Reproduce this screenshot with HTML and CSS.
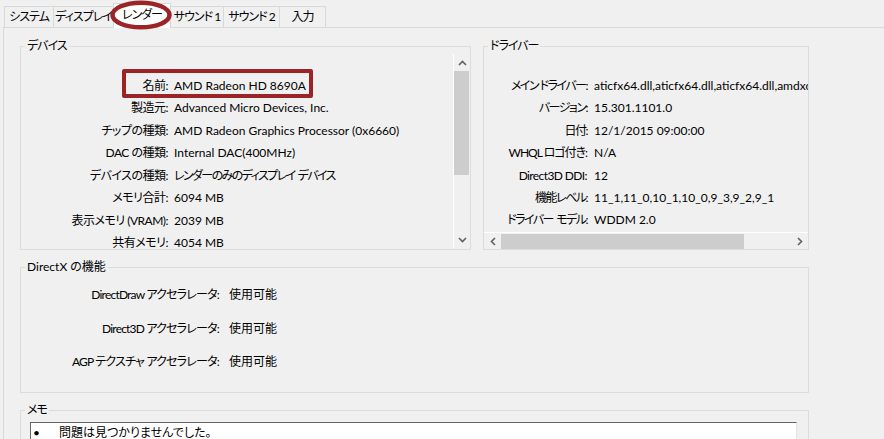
FILE: index.html
```html
<!DOCTYPE html>
<html lang="ja">
<head>
  <meta charset="UTF-8" />
  <title>DirectX 診断ツール</title>
  <link rel="stylesheet" href="styles.css">
</head>
<body>
  <!-- tab strip -->
  <div class="tabs">
    <div class="tab t-system">システム</div>
    <div class="tab t-display">ディスプレイ</div>
    <div class="tab t-render active">レンダー</div>
    <div class="tab t-sound1">サウンド&nbsp;1</div>
    <div class="tab t-sound2">サウンド&nbsp;2</div>
    <div class="tab t-input">入力</div>
  </div>

  <div class="panel">
    <div class="top-row">
      <fieldset class="group">
        <legend class="kana">デバイス</legend>
        <div class="scroll-v">
          <div class="info device-info">
            <div class="row"><span class="lbl">名前:</span><span class="val">AMD Radeon HD 8690A</span></div>
            <div class="row"><span class="lbl">製造元:</span><span class="val">Advanced Micro Devices, Inc.</span></div>
            <div class="row"><span class="lbl">チップの種類:</span><span class="val">AMD Radeon Graphics Processor (0x6660)</span></div>
            <div class="row"><span class="lbl">DAC の種類:</span><span class="val">Internal DAC(400MHz)</span></div>
            <div class="row"><span class="lbl">デバイスの種類:</span><span class="val kana-val">レンダーのみのディスプレイ&nbsp;&nbsp;デバイス</span></div>
            <div class="row"><span class="lbl">メモリ合計:</span><span class="val">6094 MB</span></div>
            <div class="row"><span class="lbl">表示メモリ (VRAM):</span><span class="val">2039 MB</span></div>
            <div class="row"><span class="lbl">共有メモリ:</span><span class="val">4054 MB</span></div>
          </div>
          <div class="vbar">
            <div class="arrow">
              <svg width="9" height="6" viewBox="0 0 9 6"><path d="M1 5 L4.5 1.5 L8 5" fill="none" stroke="#606060" stroke-width="1.6"/></svg>
            </div>
            <div class="vthumb"></div>
            <div class="spacer"></div>
            <div class="arrow">
              <svg width="9" height="6" viewBox="0 0 9 6"><path d="M1 1 L4.5 4.5 L8 1" fill="none" stroke="#606060" stroke-width="1.6"/></svg>
            </div>
          </div>
        </div>
      </fieldset>

      <fieldset class="group">
        <legend class="kana">ドライバー</legend>
        <div class="info driver-info">
          <div class="row"><span class="lbl">メイン&nbsp;ドライバー:</span><span class="val">aticfx64.dll,aticfx64.dll,aticfx64.dll,amdxc64.dll</span></div>
          <div class="row"><span class="lbl">バージョン:</span><span class="val">15.301.1101.0</span></div>
          <div class="row"><span class="lbl">日付:</span><span class="val">12/1/2015 09:00:00</span></div>
          <div class="row"><span class="lbl mixed">WHQL ロゴ付き:</span><span class="val">N/A</span></div>
          <div class="row"><span class="lbl latin">Direct3D DDI:</span><span class="val">12</span></div>
          <div class="row"><span class="lbl">機能レベル:</span><span class="val">11_1,11_0,10_1,10_0,9_3,9_2,9_1</span></div>
          <div class="row"><span class="lbl">ドライバー&nbsp;&nbsp;モデル:</span><span class="val">WDDM 2.0</span></div>
        </div>
        <div class="hbar">
          <div class="arrow">
            <svg width="6" height="9" viewBox="0 0 6 9"><path d="M5 1 L1.5 4.5 L5 8" fill="none" stroke="#606060" stroke-width="1.6"/></svg>
          </div>
          <div class="hthumb"></div>
          <div class="spacer"></div>
          <div class="arrow">
            <svg width="6" height="9" viewBox="0 0 6 9"><path d="M1 1 L4.5 4.5 L1 8" fill="none" stroke="#606060" stroke-width="1.6"/></svg>
          </div>
        </div>
      </fieldset>
    </div>

    <fieldset class="group features">
      <legend>DirectX の機能</legend>
      <div class="info feature-info">
        <div class="row"><span class="lbl">DirectDraw&nbsp;アクセラレータ:</span><span class="val">使用可能</span></div>
        <div class="row"><span class="lbl">Direct3D&nbsp;アクセラレータ:</span><span class="val">使用可能</span></div>
        <div class="row"><span class="lbl">AGP&nbsp;テクスチャ&nbsp;アクセラレータ:</span><span class="val">使用可能</span></div>
      </div>
    </fieldset>

    <fieldset class="group memo">
      <legend class="kana">メモ</legend>
      <div class="notes">
        <div class="note"><span class="bullet">•</span><span>問題は見つかりませんでした。</span></div>
      </div>
    </fieldset>
  </div>

  <!-- red annotations drawn over the screenshot -->
  <svg class="mark-tab" width="70" height="32" viewBox="0 0 70 32">
    <ellipse cx="35" cy="15" rx="28.5" ry="12.3" fill="none" stroke="#9b2426" stroke-width="4.5"/>
  </svg>
  <div class="mark-name"></div>
</body>
</html>
```

FILE: styles.css
```css
body {
  margin: 0;
  background-color: #f0f0f0;
  color: #000;
  font-family: "Segoe UI", Lato, "Noto Sans CJK JP", sans-serif;
  font-size: 12px;
  font-feature-settings: "palt";
  overflow: hidden;
  height: 439px;
}

/* tabs */
.tabs {
  display: flex;
  align-items: flex-end;
  height: 27px;
  padding: 0 0 0 4px;
  box-sizing: border-box;
}
.tab {
  height: 21px;
  line-height: 20px;
  box-sizing: border-box;
  border: 1px solid #d9d9d9;
  border-bottom: none;
  margin-right: -1px;
  text-align: center;
  white-space: nowrap;
  letter-spacing: -1px;
  background-color: #f0f0f0;
}
.t-system { width: 50px; }
.t-display { width: 61px; }
.t-render { width: 58px; }
.t-sound1 { width: 54px; }
.t-sound2 { width: 57px; }
.t-input { width: 47px; }
.tab.active {
  height: 25px;
  line-height: 22px;
  margin-bottom: -1px;
  background-color: #fff;
  position: relative;
  z-index: 1;
}

/* tab body */
.panel {
  margin-left: 3px;
  border-top: 1px solid #d9d9d9;
  border-left: 1px solid #d9d9d9;
  padding: 10px 0 0 16px;
}
.top-row {
  display: grid;
  grid-template-columns: 451px 326px;
  column-gap: 12px;
  width: 789px;
}

.group {
  margin: 0;
  padding: 0;
  border: 1px solid #dcdcdc;
  min-width: 0;
}
.group legend {
  margin-left: 4px;
  padding: 0 2px;
  line-height: 16px;
}
.group legend.kana { letter-spacing: -1px; }

.info .row {
  display: flex;
  align-items: center;
  white-space: nowrap;
}
.info .lbl {
  flex: none;
  text-align: right;
}

/* device list */
.scroll-v {
  display: flex;
  height: 194px;
}
.device-info {
  flex: 1;
  padding-top: 20px;
}
.device-info .row { height: 22.5px; line-height: 15px; }
.device-info .lbl { width: 147px; margin-right: 6px; letter-spacing: -0.5px; }
.kana-val { letter-spacing: -1.6px; }

.vbar {
  width: 16px;
  border-left: 1px solid #fff;
  display: flex;
  flex-direction: column;
}
.vbar .arrow {
  height: 17px;
  display: flex;
  align-items: center;
  justify-content: center;
}
.vthumb {
  height: 104px;
  margin: 0 1px 0 0;
  background-color: #cdcdcd;
}
.spacer { flex: 1; }

/* driver list */
.driver-info {
  height: 178px;
  padding-top: 21px;
  box-sizing: border-box;
  overflow: hidden;
}
.driver-info .row { height: 22.4px; line-height: 22.4px; }
.driver-info .lbl { width: 103px; margin-right: 7px; letter-spacing: -1.5px; }
.driver-info .lbl.mixed { letter-spacing: -1px; }
.driver-info .lbl.latin { letter-spacing: -0.6px; }

.hbar {
  display: flex;
  height: 16px;
  border-top: 1px solid #fff;
}
.hbar .arrow {
  width: 17px;
  display: flex;
  align-items: center;
  justify-content: center;
}
.hthumb {
  width: 243px;
  margin-top: 1px;
  background-color: #cdcdcd;
}

/* DirectX features */
.features {
  width: 789px;
  box-sizing: border-box;
  margin-top: 9px;
}
.feature-info {
  height: 117px;
  padding-top: 3px;
  box-sizing: border-box;
}
.feature-info .row { height: 33.5px; line-height: 33.5px; }
.feature-info .lbl { width: 198px; margin-right: 10px; letter-spacing: -0.8px; }

/* notes */
.memo {
  width: 789px;
  box-sizing: border-box;
  margin-top: 9px;
}
.notes {
  margin: 4px 0 0 9px;
  width: 767px;
  height: 18px;
  box-sizing: border-box;
  background-color: #fff;
  border: 1px solid;
  border-color: #646464 #e3e3e3 #e3e3e3 #646464;
  border-bottom: none;
  padding: 4px 0 0 2px;
}
.note {
  display: flex;
  line-height: 12px;
}
.bullet { width: 26px; }

/* annotations */
.mark-tab {
  position: absolute;
  left: 106px;
  top: 0;
  z-index: 2;
}
.mark-name {
  position: absolute;
  left: 122px;
  top: 69px;
  width: 191px;
  height: 29px;
  box-sizing: border-box;
  border: 4px solid #9b2426;
  border-radius: 2px;
}
```
